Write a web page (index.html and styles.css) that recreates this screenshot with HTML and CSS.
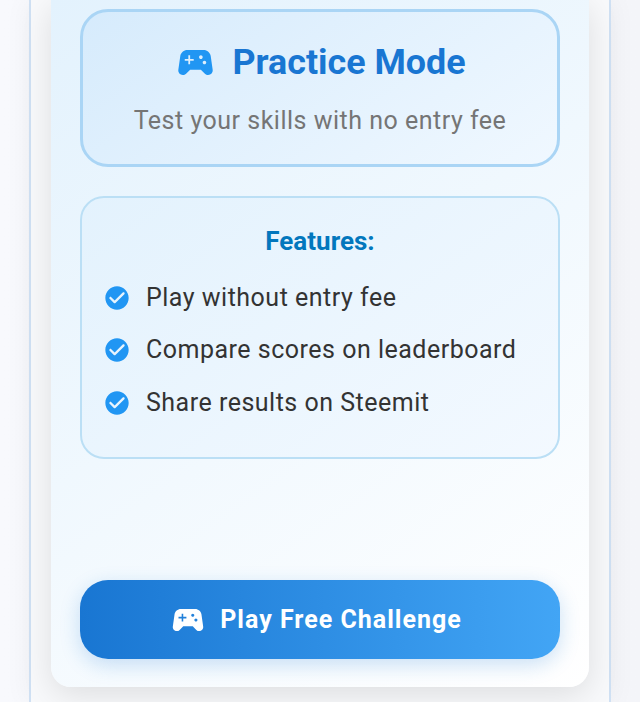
FILE: index.html
```html
<!DOCTYPE html>
<html lang="en">
<head>
<meta charset="utf-8">
<title>Practice Mode</title>
<link rel="stylesheet" href="styles.css">
</head>
<body>
<div class="panel">
  <main class="card">
    <section class="hero">
      <h1 class="hero-title">
        <svg class="hero-icon" viewBox="0 0 24 24"><path d="M21.58 16.09l-1.09-7.66C20.21 6.46 18.52 5 16.53 5H7.47C5.48 5 3.79 6.46 3.51 8.43l-1.09 7.66C2.2 17.63 3.39 19 4.94 19c.68 0 1.32-.27 1.8-.75L9 16h6l2.25 2.25c.48.48 1.13.75 1.8.75 1.56 0 2.75-1.37 2.53-2.91zM11 11H9v2H8v-2H6v-1h2V8h1v2h2v1zm4-1c-.55 0-1-.45-1-1s.45-1 1-1 1 .45 1 1-.45 1-1 1zm2 3c-.55 0-1-.45-1-1s.45-1 1-1 1 .45 1 1-.45 1-1 1z"/></svg>
        <span>Practice Mode</span>
      </h1>
      <p class="hero-sub">Test your skills with no entry fee</p>
    </section>
    <section class="features">
      <h2 class="features-title">Features:</h2>
      <ul class="feature-list">
        <li class="feature"><svg class="check" viewBox="0 0 24 24"><path d="M12 2C6.48 2 2 6.48 2 12s4.48 10 10 10 10-4.48 10-10S17.52 2 12 2zM9.29 16.29 5.7 12.7c-.39-.39-.39-1.02 0-1.41.39-.39 1.02-.39 1.41 0L10 14.17l6.88-6.88c.39-.39 1.02-.39 1.41 0 .39.39.39 1.02 0 1.41l-7.59 7.59c-.38.39-1.02.39-1.41 0z"/></svg>Play without entry fee</li>
        <li class="feature"><svg class="check" viewBox="0 0 24 24"><path d="M12 2C6.48 2 2 6.48 2 12s4.48 10 10 10 10-4.48 10-10S17.52 2 12 2zM9.29 16.29 5.7 12.7c-.39-.39-.39-1.02 0-1.41.39-.39 1.02-.39 1.41 0L10 14.17l6.88-6.88c.39-.39 1.02-.39 1.41 0 .39.39.39 1.02 0 1.41l-7.59 7.59c-.38.39-1.02.39-1.41 0z"/></svg>Compare scores on leaderboard</li>
        <li class="feature"><svg class="check" viewBox="0 0 24 24"><path d="M12 2C6.48 2 2 6.48 2 12s4.48 10 10 10 10-4.48 10-10S17.52 2 12 2zM9.29 16.29 5.7 12.7c-.39-.39-.39-1.02 0-1.41.39-.39 1.02-.39 1.41 0L10 14.17l6.88-6.88c.39-.39 1.02-.39 1.41 0 .39.39.39 1.02 0 1.41l-7.59 7.59c-.38.39-1.02.39-1.41 0z"/></svg>Share results on Steemit</li>
      </ul>
    </section>
    <button class="play" type="button">
      <svg class="play-icon" viewBox="0 0 24 24"><path d="M21.58 16.09l-1.09-7.66C20.21 6.46 18.52 5 16.53 5H7.47C5.48 5 3.79 6.46 3.51 8.43l-1.09 7.66C2.2 17.63 3.39 19 4.94 19c.68 0 1.32-.27 1.8-.75L9 16h6l2.25 2.25c.48.48 1.13.75 1.8.75 1.56 0 2.75-1.37 2.53-2.91zM11 11H9v2H8v-2H6v-1h2V8h1v2h2v1zm4-1c-.55 0-1-.45-1-1s.45-1 1-1 1 .45 1 1-.45 1-1 1zm2 3c-.55 0-1-.45-1-1s.45-1 1-1 1 .45 1 1-.45 1-1 1z"/></svg>
      <span>Play Free Challenge</span>
    </button>
  </main>
</div>
</body>
</html>
```
FILE: styles.css
```css
* { box-sizing: border-box; }
html, body { margin: 0; height: 702px; overflow: hidden; }
body {
  background: linear-gradient(90deg, #f8f9fd 0%, #f4f5f9 100%);
  font-family: Roboto, "Liberation Sans", sans-serif;
  padding: 0 29px;
}
.panel {
  height: 702px;
  border-left: 2px solid #cfe0f3;
  border-right: 2px solid #cfe0f3;
  background: #f8f9fb;
  padding: 0 20px;
  box-shadow: 0 0 26px rgba(0, 0, 0, 0.05);
}
.card {
  height: 687px;
  padding: 9px 29px 28px;
  border-radius: 0 0 20px 20px;
  background: linear-gradient(145deg, #e3f2fd 0%, #ffffff 100%);
  box-shadow: 0 8px 32px rgba(0, 0, 0, 0.11);
  display: flex;
  flex-direction: column;
}
.hero {
  height: 158px;
  border: 3px solid #aad5f5;
  border-radius: 28px;
  background: linear-gradient(145deg, #d6ebfc 0%, #f0f8ff 100%);
  display: flex;
  flex-direction: column;
  align-items: center;
  padding-top: 28px;
}
.hero-title {
  margin: 0;
  display: flex;
  align-items: center;
  gap: 15px;
  font-size: 35.85px;
  line-height: 44px;
  font-weight: 700;
  color: #1976d2;
}
.hero-icon { width: 43px; height: 43px; fill: #2196f3; }
.hero-sub {
  margin: 22px 0 0;
  font-size: 25px;
  line-height: 30px;
  letter-spacing: 0.5px;
  color: #757575;
}
.features {
  margin-top: 29px;
  height: 263px;
  border: 2px solid #bbdff5;
  border-radius: 24px;
  background: linear-gradient(145deg, #e3f2fd 0%, #f3f9ff 100%);
  padding: 29px 24px 0;
}
.features-title {
  margin: 0;
  text-align: center;
  font-size: 26px;
  line-height: 28px;
  font-weight: 700;
  color: #0277bd;
}
.feature-list {
  list-style: none;
  margin: 27.6px 0 0;
  padding: 0;
  display: flex;
  flex-direction: column;
  gap: 22.5px;
}
.feature {
  display: flex;
  align-items: center;
  gap: 15px;
  font-size: 25px;
  line-height: 30px;
  letter-spacing: 0.5px;
  color: #333333;
}
.check { width: 28px; height: 28px; fill: #2196f3; flex: none; margin-left: -3px; }
.play {
  margin-top: auto;
  height: 79px;
  flex: none;
  border: 0;
  border-radius: 28px;
  padding: 0 9px 0 0;
  background: linear-gradient(90deg, #1976d2 0%, #42a5f5 100%);
  box-shadow: 0 6px 20px rgba(25, 118, 210, 0.22);
  display: flex;
  align-items: center;
  justify-content: center;
  gap: 13px;
  color: #ffffff;
  font-family: inherit;
  font-size: 25px;
  font-weight: 700;
  letter-spacing: 1px;
}
.play-icon { width: 38px; height: 38px; fill: #ffffff; }
```
